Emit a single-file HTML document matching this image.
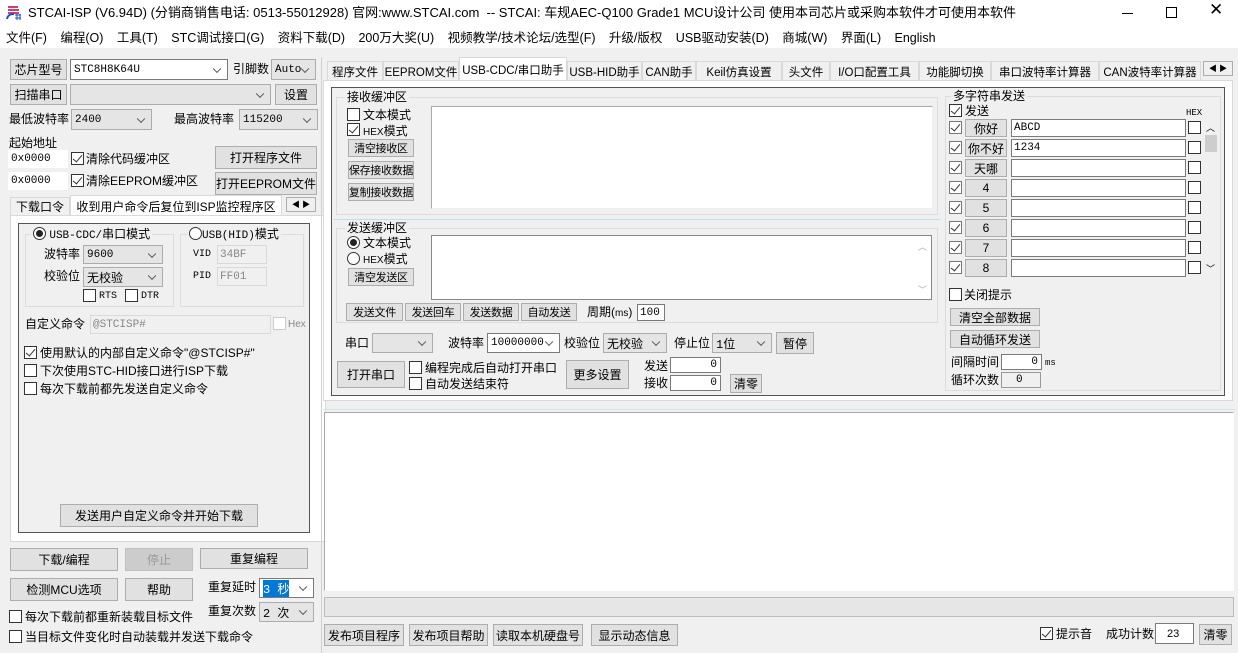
<!DOCTYPE html>
<html><head><meta charset="utf-8">
<style>
*{margin:0;padding:0;box-sizing:border-box}
body{width:1238px;height:653px;background:#f0f0f0;font-family:"Liberation Sans","Noto Sans CJK SC",sans-serif;font-size:12px;color:#000;position:relative;overflow:hidden}
.a{position:absolute;white-space:nowrap}
.t{position:absolute;white-space:nowrap;font-size:12px;line-height:14px}
.b{position:absolute;background:#e1e1e1;border:1px solid #adadad;display:flex;align-items:center;justify-content:center;font-size:12px;white-space:nowrap;overflow:hidden}
.i{position:absolute;background:#fff;border:1px solid #7a7a7a;font-size:11px;padding-left:2px;display:flex;align-items:center;white-space:nowrap;font-family:"Liberation Mono","Noto Sans CJK SC",monospace}
.s{position:absolute;background:#e5e5e5;border:1px solid #acacac;font-size:11px;padding-left:3px;display:flex;align-items:center;white-space:nowrap;font-family:"Liberation Mono","Noto Sans CJK SC",monospace}
.s::after{content:"";position:absolute;right:7px;top:50%;width:5px;height:5px;border-right:1px solid #555;border-bottom:1px solid #555;transform:translateY(-70%) rotate(45deg)}
.w{background:#fff;border-color:#7a7a7a}
.c{position:absolute;width:13px;height:13px;border:1px solid #333;background:#fff}
.c.k::after{content:"";position:absolute;left:3px;top:0px;width:4px;height:8px;border-right:1.5px solid #333;border-bottom:1.5px solid #333;transform:rotate(40deg)}
.r{position:absolute;width:13px;height:13px;border:1px solid #333;border-radius:50%;background:#fff}
.r.k::after{content:"";position:absolute;left:2px;top:2px;width:7px;height:7px;border-radius:50%;background:#222}
.g{position:absolute;border:1px solid #dcdcdc}
.gl{position:absolute;background:#f0f0f0;padding:0 2px;font-size:12px;line-height:14px;white-space:nowrap}
.tab{position:absolute;top:61px;height:20px;border:1px solid #d9d9d9;border-bottom:none;background:#f0f0f0;font-size:11.5px;display:flex;align-items:center;justify-content:center;white-space:nowrap}
.sm{font-size:11px;letter-spacing:-0.3px}
</style></head><body>
<div class="a" style="left:0;top:0;width:1238px;height:48px;background:#fff"></div>
<svg class="a" style="left:6px;top:6px" width="16" height="14"><path d="M2 1h10M2 4h11M2 7h11" stroke="#d0406a" stroke-width="2"/><path d="M1 13c1-5 5-5 7-5" stroke="#2050c0" stroke-width="2" fill="none"/><path d="M9 9h6M9 12h6M11 8v6M14 8v6" stroke="#2050c0" stroke-width="1"/></svg>
<div class="t" style="left:28px;top:6px;font-size:13px">STCAI-ISP (V6.94D) (分销商销售电话: 0513-55012928) 官网:www.STCAI.com &nbsp;-- STCAI: 车规AEC-Q100 Grade1 MCU设计公司 使用本司芯片或采购本软件才可使用本软件</div>
<div class="a" style="left:1122px;top:13px;width:11px;height:1px;background:#000"></div>
<div class="a" style="left:1166px;top:7px;width:11px;height:11px;border:1px solid #000"></div>
<div class="t" style="left:1209px;top:3px;font-size:17px;font-weight:200">✕</div>
<div class="t" style="left:6px;top:31px;font-size:12.5px;word-spacing:1px">文件(F) &nbsp;&nbsp;编程(O) &nbsp;&nbsp;工具(T) &nbsp;&nbsp;STC调试接口(G) &nbsp;&nbsp;资料下载(D) &nbsp;&nbsp;200万大奖(U) &nbsp;&nbsp;视频教学/技术论坛/选型(F) &nbsp;&nbsp;升级/版权 &nbsp;&nbsp;USB驱动安装(D) &nbsp;&nbsp;商城(W) &nbsp;&nbsp;界面(L) &nbsp;&nbsp;English</div>

<div class="b" style="left:10px;top:59px;width:57px;height:21px">芯片型号</div>
<div class="s w" style="left:70px;top:59px;width:158px;height:21px">STC8H8K64U</div>
<div class="t" style="left:233px;top:62px">引脚数</div>
<div class="s" style="left:271px;top:59px;width:45px;height:21px">Auto</div>
<div class="b" style="left:10px;top:84px;width:57px;height:21px">扫描串口</div>
<div class="s" style="left:70px;top:84px;width:201px;height:21px"></div>
<div class="b" style="left:275px;top:84px;width:42px;height:21px">设置</div>
<div class="t" style="left:9px;top:112px">最低波特率</div>
<div class="s" style="left:71px;top:109px;width:81px;height:21px">2400</div>
<div class="t" style="left:174px;top:112px">最高波特率</div>
<div class="s" style="left:239px;top:109px;width:79px;height:21px">115200</div>
<div class="t" style="left:9px;top:136px">起始地址</div>
<div class="i" style="left:8px;top:150px;width:60px;height:18px;border-color:#fff">0x0000</div>
<div class="c k" style="left:71px;top:152px"></div><div class="t" style="left:86px;top:152px">清除代码缓冲区</div>
<div class="b" style="left:215px;top:146px;width:102px;height:23px">打开程序文件</div>
<div class="i" style="left:8px;top:172px;width:60px;height:18px;border-color:#fff">0x0000</div>
<div class="c k" style="left:71px;top:174px"></div><div class="t" style="left:86px;top:174px">清除EEPROM缓冲区</div>
<div class="b" style="left:215px;top:172px;width:102px;height:23px">打开EEPROM文件</div>
<div class="a" style="left:10px;top:197px;width:60px;height:19px;border:1px solid #d9d9d9;display:flex;align-items:center;justify-content:center">下载口令</div>
<div class="a" style="left:70px;top:195px;width:212px;height:21px;background:#fff;border:1px solid #d9d9d9;border-bottom:none;display:flex;align-items:center;justify-content:center">收到用户命令后复位到ISP监控程序区</div>
<div class="a" style="left:286px;top:197px;width:30px;height:15px;border:1px solid #adadad;font-size:8px;display:flex;align-items:center;justify-content:space-around">◀ ▶</div>
<div class="a" style="left:10px;top:215px;width:316px;height:327px;background:#fff;border:1px solid #d9d9d9"></div>
<div class="a" style="left:18px;top:223px;width:292px;height:310px;border:1px solid #555;background:#f0f0f0"></div>
<div class="g" style="left:25px;top:234px;width:149px;height:73px"></div>
<div class="gl" style="left:31px;top:227px"><span class="r k" style="position:relative;display:inline-block;vertical-align:-2px"></span> <span style="font-family:'Liberation Mono','Noto Sans CJK SC';font-size:11px">USB-CDC/</span>串口模式</div>
<div class="g" style="left:180px;top:234px;width:124px;height:73px"></div>
<div class="gl" style="left:187px;top:227px"><span class="r" style="position:relative;display:inline-block;vertical-align:-2px"></span><span style="font-family:'Liberation Mono','Noto Sans CJK SC';font-size:11px">USB(HID)</span>模式</div>
<div class="t" style="left:44px;top:247px">波特率</div>
<div class="s" style="left:83px;top:245px;width:80px;height:19px">9600</div>
<div class="t" style="left:44px;top:269px">校验位</div>
<div class="s" style="left:83px;top:267px;width:80px;height:20px;font-size:12px">无校验</div>
<div class="c" style="left:83px;top:289px"></div><div class="t" style="left:99px;top:290px;font-size:10px;font-family:'Liberation Mono'">RTS</div>
<div class="c" style="left:125px;top:289px"></div><div class="t" style="left:141px;top:290px;font-size:10px;font-family:'Liberation Mono'">DTR</div>
<div class="t" style="left:193px;top:248px;font-size:10px;font-family:'Liberation Mono'">VID</div>
<div class="i" style="left:217px;top:245px;width:50px;height:19px;border-color:#d9d9d9;color:#888;background:#f0f0f0">34BF</div>
<div class="t" style="left:193px;top:270px;font-size:10px;font-family:'Liberation Mono'">PID</div>
<div class="i" style="left:217px;top:267px;width:50px;height:19px;border-color:#d9d9d9;color:#888;background:#f0f0f0">FF01</div>
<div class="t" style="left:25px;top:317px">自定义命令</div>
<div class="i" style="left:90px;top:315px;width:181px;height:19px;border-color:#d9d9d9;color:#888;background:#f0f0f0">@STCISP#</div>
<div class="c" style="left:273px;top:317px;border-color:#ccc"></div><div class="t" style="left:288px;top:318px;font-size:10px;color:#888">Hex</div>
<div class="c k" style="left:24px;top:346px"></div><div class="t" style="left:40px;top:346px">使用默认的内部自定义命令"@STCISP#"</div>
<div class="c" style="left:24px;top:364px"></div><div class="t" style="left:40px;top:364px">下次使用STC-HID接口进行ISP下载</div>
<div class="c" style="left:24px;top:382px"></div><div class="t" style="left:40px;top:382px">每次下载前都先发送自定义命令</div>
<div class="b" style="left:60px;top:504px;width:198px;height:23px">发送用户自定义命令并开始下载</div>
<div class="b" style="left:10px;top:548px;width:108px;height:23px">下载/编程</div>
<div class="b" style="left:125px;top:548px;width:68px;height:23px;color:#999;background:#ccc;border-color:#bfbfbf">停止</div>
<div class="b" style="left:200px;top:548px;width:108px;height:21px">重复编程</div>
<div class="b" style="left:10px;top:578px;width:108px;height:23px">检测MCU选项</div>
<div class="b" style="left:125px;top:578px;width:68px;height:23px">帮助</div>
<div class="t" style="left:208px;top:580px">重复延时</div>
<div class="s w" style="left:259px;top:578px;width:55px;height:20px;font-size:12px"><span style="background:#0078d7;color:#fff">3 秒</span></div>
<div class="t" style="left:208px;top:604px">重复次数</div>
<div class="s" style="left:259px;top:602px;width:55px;height:20px;font-size:12px">2 次</div>
<div class="c" style="left:9px;top:610px"></div><div class="t" style="left:25px;top:610px">每次下载前都重新装载目标文件</div>
<div class="c" style="left:9px;top:630px"></div><div class="t" style="left:25px;top:630px">当目标文件变化时自动装载并发送下载命令</div>
<div class="a" style="left:321px;top:57px;width:1px;height:596px;background:#d0d0d0"></div>

<div class="tab" style="left:327px;width:56px">程序文件</div>
<div class="tab" style="left:383px;width:76px">EEPROM文件</div>
<div class="tab" style="left:459px;top:57px;height:24px;width:108px;background:#fff">USB-CDC/串口助手</div>
<div class="tab" style="left:567px;width:75px">USB-HID助手</div>
<div class="tab" style="left:642px;width:54px">CAN助手</div>
<div class="tab" style="left:696px;width:86px">Keil仿真设置</div>
<div class="tab" style="left:782px;width:48px">头文件</div>
<div class="tab" style="left:830px;width:89px">I/O口配置工具</div>
<div class="tab" style="left:919px;width:72px">功能脚切换</div>
<div class="tab" style="left:991px;width:108px">串口波特率计算器</div>
<div class="tab" style="left:1099px;width:102px">CAN波特率计算器</div>
<div class="a" style="left:1203px;top:61px;width:30px;height:15px;border:1px solid #adadad;font-size:8px;display:flex;align-items:center;justify-content:space-around;background:#f0f0f0">◀ ▶</div>
<div class="a" style="left:323px;top:80px;width:910px;height:321px;background:#fff;border:1px solid #d9d9d9"></div>
<div class="a" style="left:331px;top:87px;width:894px;height:309px;border:1px solid #555;background:#f0f0f0"></div>
<div class="g" style="left:336px;top:97px;width:602px;height:118px"></div>
<div class="gl" style="left:345px;top:90px">接收缓冲区</div>
<div class="c" style="left:347px;top:108px"></div><div class="t" style="left:363px;top:108px">文本模式</div>
<div class="c k" style="left:347px;top:123px"></div><div class="t" style="left:363px;top:124px"><span style="font-size:10px">HEX</span>模式</div>
<div class="b sm" style="left:348px;top:139px;width:66px;height:18px">清空接收区</div>
<div class="b sm" style="left:348px;top:161px;width:66px;height:18px">保存接收数据</div>
<div class="b sm" style="left:348px;top:183px;width:66px;height:18px">复制接收数据</div>
<div class="a" style="left:431px;top:106px;width:502px;height:103px;background:#fff;border:1px solid #aaa;border-right-color:#eee;border-bottom-color:#eee"></div>
<div class="a" style="left:334px;top:219px;width:606px;height:1px;background:#bfe0ea"></div>
<div class="g" style="left:336px;top:228px;width:602px;height:95px"></div>
<div class="gl" style="left:345px;top:221px">发送缓冲区</div>
<div class="r k" style="left:347px;top:236px"></div><div class="t" style="left:363px;top:236px">文本模式</div>
<div class="r" style="left:347px;top:252px"></div><div class="t" style="left:363px;top:252px"><span style="font-size:10px">HEX</span>模式</div>
<div class="b sm" style="left:348px;top:268px;width:66px;height:18px">清空发送区</div>
<div class="a" style="left:431px;top:235px;width:501px;height:65px;background:#fff;border:1px solid #888"></div>
<div class="t" style="left:918px;top:240px;font-size:9px;color:#aaa">︿</div>
<div class="t" style="left:918px;top:283px;font-size:9px;color:#aaa">﹀</div>
<div class="b sm" style="left:346px;top:303px;width:57px;height:18px">发送文件</div>
<div class="b sm" style="left:405px;top:303px;width:56px;height:18px">发送回车</div>
<div class="b sm" style="left:463px;top:303px;width:56px;height:18px">发送数据</div>
<div class="b sm" style="left:521px;top:303px;width:56px;height:18px">自动发送</div>
<div class="t" style="left:587px;top:305px">周期(<span style="font-size:10px">ms</span>)</div>
<div class="i" style="left:637px;top:304px;width:28px;height:17px">100</div>
<div class="t" style="left:345px;top:336px">串口</div>
<div class="s" style="left:372px;top:333px;width:61px;height:20px"></div>
<div class="t" style="left:448px;top:336px">波特率</div>
<div class="s w" style="left:487px;top:333px;width:73px;height:20px">10000000</div>
<div class="t" style="left:564px;top:336px">校验位</div>
<div class="s" style="left:603px;top:333px;width:64px;height:20px;font-size:12px">无校验</div>
<div class="t" style="left:674px;top:336px">停止位</div>
<div class="s" style="left:712px;top:333px;width:60px;height:20px;font-size:12px">1位</div>
<div class="b" style="left:776px;top:332px;width:38px;height:22px">暂停</div>
<div class="b" style="left:337px;top:361px;width:68px;height:27px">打开串口</div>
<div class="c" style="left:409px;top:361px"></div><div class="t" style="left:425px;top:361px">编程完成后自动打开串口</div>
<div class="c" style="left:409px;top:377px"></div><div class="t" style="left:425px;top:377px">自动发送结束符</div>
<div class="b" style="left:566px;top:360px;width:63px;height:29px">更多设置</div>
<div class="t" style="left:644px;top:359px">发送</div>
<div class="i" style="left:670px;top:357px;width:51px;height:16px;justify-content:flex-end;padding-right:3px">0</div>
<div class="t" style="left:644px;top:376px">接收</div>
<div class="i" style="left:670px;top:375px;width:51px;height:16px;justify-content:flex-end;padding-right:3px">0</div>
<div class="b" style="left:730px;top:374px;width:32px;height:19px">清零</div>
<div class="g" style="left:945px;top:96px;width:276px;height:295px"></div>
<div class="gl" style="left:951px;top:89px">多字符串发送</div>
<div class="c k" style="left:949px;top:104px"></div><div class="t" style="left:965px;top:104px">发送</div>
<div class="t" style="left:1186px;top:106px;font-size:9px;font-family:'Liberation Mono'">HEX</div>
<div class="b" style="left:965px;top:119px;width:42px;height:18px">你好</div><div class="i" style="left:1011px;top:119px;width:175px;height:18px">ABCD</div>
<div class="b" style="left:965px;top:139px;width:42px;height:18px">你不好</div><div class="i" style="left:1011px;top:139px;width:175px;height:18px">1234</div>
<div class="b" style="left:965px;top:159px;width:42px;height:18px">天哪</div><div class="i" style="left:1011px;top:159px;width:175px;height:18px"></div>
<div class="b" style="left:965px;top:179px;width:42px;height:18px">4</div><div class="i" style="left:1011px;top:179px;width:175px;height:18px"></div>
<div class="b" style="left:965px;top:199px;width:42px;height:18px">5</div><div class="i" style="left:1011px;top:199px;width:175px;height:18px"></div>
<div class="b" style="left:965px;top:219px;width:42px;height:18px">6</div><div class="i" style="left:1011px;top:219px;width:175px;height:18px"></div>
<div class="b" style="left:965px;top:239px;width:42px;height:18px">7</div><div class="i" style="left:1011px;top:239px;width:175px;height:18px"></div>
<div class="b" style="left:965px;top:259px;width:42px;height:18px">8</div><div class="i" style="left:1011px;top:259px;width:175px;height:18px"></div>
<div class="c k" style="left:949px;top:121px;border-color:#777"></div><div class="c k" style="left:949px;top:141px;border-color:#777"></div><div class="c k" style="left:949px;top:161px;border-color:#777"></div><div class="c k" style="left:949px;top:181px;border-color:#777"></div><div class="c k" style="left:949px;top:201px;border-color:#777"></div><div class="c k" style="left:949px;top:221px;border-color:#777"></div><div class="c k" style="left:949px;top:241px;border-color:#777"></div><div class="c k" style="left:949px;top:261px;border-color:#777"></div>
<div class="c" style="left:1188px;top:121px"></div><div class="c" style="left:1188px;top:141px"></div><div class="c" style="left:1188px;top:161px"></div><div class="c" style="left:1188px;top:181px"></div><div class="c" style="left:1188px;top:201px"></div><div class="c" style="left:1188px;top:221px"></div><div class="c" style="left:1188px;top:241px"></div><div class="c" style="left:1188px;top:261px"></div>
<div class="t" style="left:1206px;top:121px;font-size:9px">︿</div>
<div class="a" style="left:1205px;top:135px;width:12px;height:17px;background:#cdcdcd"></div>
<div class="t" style="left:1206px;top:262px;font-size:9px">﹀</div>
<div class="c" style="left:949px;top:288px"></div><div class="t" style="left:964px;top:288px">关闭提示</div>
<div class="b" style="left:950px;top:308px;width:90px;height:18px">清空全部数据</div>
<div class="b" style="left:950px;top:330px;width:90px;height:18px">自动循环发送</div>
<div class="t" style="left:951px;top:355px">间隔时间</div>
<div class="i" style="left:1001px;top:354px;width:41px;height:16px;justify-content:flex-end;padding-right:3px">0</div>
<div class="t" style="left:1045px;top:356px;font-size:9px;font-family:'Liberation Mono'">ms</div>
<div class="t" style="left:951px;top:373px">循环次数</div>
<div class="i" style="left:1001px;top:372px;width:40px;height:16px;background:#f0f0f0;border-color:#999;padding-left:14px">0</div>
<div class="a" style="left:323px;top:409px;width:912px;height:1px;background:#cde6ee"></div>
<div class="a" style="left:324px;top:412px;width:910px;height:179px;background:#fff;border:1px solid #aaa;border-right-color:#fff;border-bottom-color:#fff"></div>
<div class="a" style="left:324px;top:597px;width:910px;height:20px;background:#e6e6e6;border:1px solid #bcbcbc"></div>
<div class="b" style="left:324px;top:624px;width:80px;height:22px">发布项目程序</div>
<div class="b" style="left:409px;top:624px;width:79px;height:22px">发布项目帮助</div>
<div class="b" style="left:493px;top:624px;width:90px;height:22px">读取本机硬盘号</div>
<div class="b" style="left:591px;top:624px;width:87px;height:22px">显示动态信息</div>
<div class="c k" style="left:1040px;top:627px"></div><div class="t" style="left:1056px;top:627px">提示音</div>
<div class="t" style="left:1106px;top:627px">成功计数</div>
<div class="i" style="left:1155px;top:623px;width:39px;height:21px;font-size:11px;font-family:'Liberation Sans';padding-left:11px">23</div>
<div class="b" style="left:1199px;top:624px;width:33px;height:21px">清零</div>
</body></html>
